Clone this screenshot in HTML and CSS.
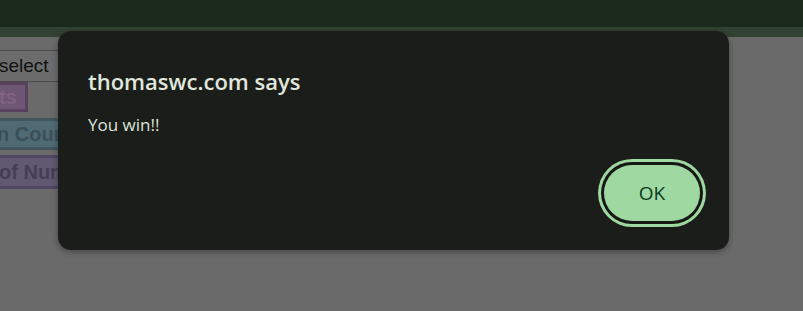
FILE: index.html
```html
<!DOCTYPE html>
<html>
<head>
<meta charset="utf-8">
<link rel="stylesheet" href="styles.css">
</head>
<body>
<div class="topbar"></div>
<div class="band"></div>
<main class="page">
  <div class="select-box"><span class="select-text">select</span></div>
  <div class="tag tag-purple">ts</div>
  <div class="tag tag-blue">n Count</div>
  <div class="tag tag-violet">of Numbers</div>
</main>
<div class="dialog" role="alertdialog">
  <h1 class="dialog-title">thomaswc.com says</h1>
  <p class="dialog-msg">You win!!</p>
  <div class="dialog-actions">
    <button class="ok-btn">OK</button>
  </div>
</div>
</body>
</html>
```
FILE: styles.css
```css
html, body {
  margin: 0;
  padding: 0;
  background: #6a6a6a;
  width: 803px;
  height: 311px;
  overflow: hidden;
}
.topbar {
  height: 27px;
  background: #1b2a1d;
}
.band {
  height: 10px;
  background: #324232;
}
.page {
  display: flex;
  flex-direction: column;
  align-items: flex-start;
  padding-top: 13px;
  font-family: "Liberation Sans", Arial, sans-serif;
}
.select-box {
  box-sizing: border-box;
  width: 80px;
  height: 32px;
  border-top: 1px solid #4a4a4a;
  border-bottom: 1px solid #4a4a4a;
  background: #6c6c6c;
  color: #111;
  font-size: 19px;
  line-height: 30px;
}
.select-text {
  margin-left: -1px;
}
.tag {
  box-sizing: border-box;
  font-weight: bold;
  font-size: 20px;
  white-space: nowrap;
  border: 3px solid;
  padding: 0 3px 0 0;
}
.tag-purple {
  height: 30px;
  line-height: 24px;
  margin-left: -4px;
  padding-right: 8px;
  background: #6e5774;
  border-color: #59405d;
  color: #7e6384;
}
.tag-blue {
  height: 32px;
  line-height: 26px;
  margin-top: 6px;
  margin-left: -6px;
  background: #506a74;
  border-color: #40555e;
  color: #3c4f59;
}
.tag-violet {
  height: 34px;
  line-height: 28px;
  margin-top: 5px;
  margin-left: -4px;
  background: #615872;
  border-color: #4f4661;
  color: #453e56;
}
.dialog {
  position: absolute;
  left: 58px;
  top: 31px;
  width: 671px;
  height: 219px;
  box-sizing: border-box;
  background: #1a1d19;
  border-radius: 13px;
  box-shadow: 0 2px 6px rgba(0, 0, 0, 0.35);
  padding: 36px 29px 29px 30px;
  display: flex;
  flex-direction: column;
  font-family: "Open Sans", "Noto Sans", sans-serif;
}
.dialog-title {
  margin: 0;
  font-size: 22px;
  font-weight: 600;
  line-height: 28px;
  color: #e0e7dd;
}
.dialog-msg {
  margin: 19px 0 0;
  font-size: 17px;
  line-height: 22px;
  color: #dde4da;
}
.dialog-actions {
  margin-top: auto;
  display: flex;
  justify-content: flex-end;
}
.ok-btn {
  width: 96px;
  height: 56px;
  border: none;
  border-radius: 28px;
  background: #9fd8a0;
  color: #0b3a1f;
  font-family: "Open Sans", "Noto Sans", sans-serif;
  font-size: 19px;
  box-shadow: 0 0 0 3px #161815, 0 0 0 6px #9fd8a0;
  padding: 0;
}
```
